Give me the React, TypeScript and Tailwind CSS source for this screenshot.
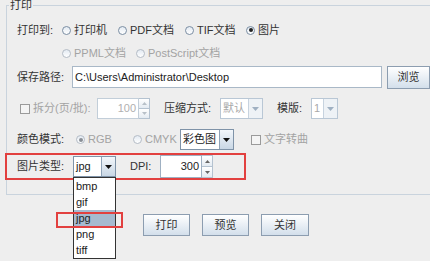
import * as React from 'react'
import { clsx } from 'clsx'

const font = "font-['Liberation_Sans','Noto_Sans_CJK_SC',sans-serif]"

function Radio({ checked, disabled }: { checked?: boolean; disabled?: boolean }) {
  return (
    <span
      className={clsx(
        'inline-flex size-[9px] shrink-0 items-center justify-center rounded-full border bg-gradient-to-b from-[#e3eaf2] to-white',
        disabled ? 'border-[#b4bcc6]' : 'border-[#7b8ea3]',
      )}
    >
      {checked ? (
        <span
          className={clsx(
            'size-[4px] rounded-full',
            disabled ? 'bg-[#8a8f96]' : 'bg-[#222]',
          )}
        />
      ) : null}
    </span>
  )
}

function Option({
  label,
  checked,
  disabled,
  className,
}: {
  label: string
  checked?: boolean
  disabled?: boolean
  className?: string
}) {
  return (
    <span className={clsx('flex items-center gap-[3px]', className)}>
      <Radio checked={checked} disabled={disabled} />
      <span className={disabled ? 'text-[#a3a3a3]' : 'text-[#333]'}>{label}</span>
    </span>
  )
}

function Check({ label, className }: { label: string; className?: string }) {
  return (
    <span className={clsx('flex items-center gap-[3px] text-[#a3a3a3]', className)}>
      <span className="size-[10px] shrink-0 border border-[#9a9a9a] bg-[#f4f4f4]" />
      <span>{label}</span>
    </span>
  )
}

function DownArrow({ disabled }: { disabled?: boolean }) {
  return (
    <svg width="7" height="4" viewBox="0 0 7 4" fill={disabled ? '#9fb0c2' : '#111'}>
      <path d="M0 0h7L3.5 4z" />
    </svg>
  )
}

function Combo({
  value,
  width,
  disabled,
}: {
  value: string
  width: string
  disabled?: boolean
}) {
  return (
    <span
      className={clsx(
        'flex h-full border',
        width,
        disabled ? 'border-[#b9c7d5]' : 'border-[#7f93a8]',
      )}
    >
      <span
        className={clsx(
          'flex flex-1 items-center overflow-hidden bg-white pl-[2px]',
          disabled ? 'text-[#a8a8a8]' : 'text-[#222]',
        )}
      >
        {value}
      </span>
      <span
        className={clsx(
          'flex w-[14px] items-center justify-center border-l',
          disabled
            ? 'border-[#c7d3df] bg-[#eef2f6]'
            : 'border-[#8fa3b8] bg-gradient-to-b from-[#f3f7fb] to-[#c9d7e5]',
        )}
      >
        <DownArrow disabled={disabled} />
      </span>
    </span>
  )
}

function Spinner({
  value,
  width,
  disabled,
}: {
  value: string
  width: string
  disabled?: boolean
}) {
  const arrow = disabled ? '#b8c0c8' : '#666'
  return (
    <span className={clsx('flex h-full', width)}>
      <span
        className={clsx(
          'flex flex-1 items-center justify-end border bg-white pr-[2px]',
          disabled ? 'border-[#c2ced9] text-[#b0b0b0]' : 'border-[#9fb0c2] text-[#222]',
        )}
      >
        {value}
      </span>
      <span className="flex w-[11px] flex-col">
        <span className="flex flex-1 items-center justify-center border border-l-0 border-[#b4c2d0] bg-gradient-to-b from-white to-[#e4ebf2]">
          <svg width="5" height="3" viewBox="0 0 5 3" fill={arrow}>
            <path d="M0 3h5L2.5 0z" />
          </svg>
        </span>
        <span className="flex flex-1 items-center justify-center border border-t-0 border-l-0 border-[#b4c2d0] bg-gradient-to-b from-white to-[#e4ebf2]">
          <svg width="5" height="3" viewBox="0 0 5 3" fill={arrow}>
            <path d="M0 0h5L2.5 3z" />
          </svg>
        </span>
      </span>
    </span>
  )
}

function Button({ label, width }: { label: string; width: string }) {
  return (
    <button
      className={clsx(
        'flex h-[22px] items-center justify-center border border-[#8c9db0] bg-gradient-to-b from-white to-[#d3dfeb] text-[#333]',
        width,
      )}
    >
      {label}
    </button>
  )
}

const formats = ['bmp', 'gif', 'jpg', 'png', 'tiff']

export default function App() {
  return (
    <div className={clsx('h-[261px] w-[430px] overflow-hidden bg-[#eeeeee] text-[11px] leading-none', font)}>
      <fieldset className="ml-[6px] w-[440px] border border-[#c9d3dd] pb-[14px]">
        <legend className="ml-[2px] px-[1px] leading-[11px] text-[#333]">打印</legend>

        <div className="mt-[9px] flex h-[20px] items-center pl-[10px] text-[#333]">
          <span className="w-[45px]">打印到:</span>
          <Option className="w-[56px]" label="打印机" />
          <Option className="w-[67px]" label="PDF文档" />
          <Option className="w-[61px]" label="TIF文档" />
          <Option label="图片" checked />
        </div>

        <div className="mt-[3px] flex h-[20px] items-center pl-[55px]">
          <Option className="w-[74px]" label="PPML文档" disabled />
          <Option label="PostScript文档" disabled />
        </div>

        <div className="mt-[3px] flex h-[22px] items-center pl-[10px] text-[#333]">
          <span className="w-[55px]">保存路径:</span>
          <span className="flex h-full w-[310px] items-center border border-[#a9b8c7] bg-white pl-[2px] text-[#222]">
            C:\Users\Administrator\Desktop
          </span>
          <span className="ml-[5px]">
            <Button label="浏览" width="w-[43px] h-[23px]" />
          </span>
        </div>

        <div className="mt-[10px] flex h-[21px] items-center pl-[10px] text-[#333]">
          <Check className="ml-[3px] w-[77px]" label="拆分(页/批):" />
          <Spinner value="100" width="w-[53px]" disabled />
          <span className="ml-[14px] w-[56px]">压缩方式:</span>
          <Combo value="默认" width="w-[43px]" disabled />
          <span className="ml-[14px] w-[34px]">模版:</span>
          <Combo value="1" width="w-[27px]" disabled />
        </div>

        <div className="mt-[10px] flex h-[21px] items-center pl-[10px] text-[#333]">
          <span className="w-[59px]">颜色模式:</span>
          <Option className="w-[57px]" label="RGB" checked disabled />
          <Option className="w-[47px]" label="CMYK" disabled />
          <Combo value="彩色图" width="w-[54px]" />
          <Check className="ml-[17px]" label="文字转曲" />
        </div>

        <div className="-ml-[2px] mt-[3px] flex h-[27px] w-[241px] items-center border-2 border-[#e2403f] pl-[10px] text-[#333]">
          <span className="w-[56px]">图片类型:</span>
          <span className="relative flex h-[21px]">
            <Combo value="jpg" width="w-[43px]" />
            <ul className="absolute left-0 top-full z-10 w-[43px] border border-[#333] bg-white">
              {formats.map((f) => (
                <li
                  key={f}
                  className={clsx(
                    'flex h-[16px] items-center pl-[2px] text-[#222]',
                    f === 'jpg' && 'bg-[#a6bad0]',
                  )}
                >
                  {f}
                </li>
              ))}
              <li className="absolute -left-[18px] top-[34px] h-[16px] w-[67px] border-2 border-[#e2403f]" />
            </ul>
          </span>
          <span className="ml-[14px] w-[30px]">DPI:</span>
          <Spinner value="300" width="w-[53px] h-[19px]" />
        </div>
      </fieldset>

      <div className="mt-[19px] flex gap-[12px] pl-[143px]">
        <Button label="打印" width="w-[47px]" />
        <Button label="预览" width="w-[47px]" />
        <Button label="关闭" width="w-[48px]" />
      </div>
    </div>
  )
}
